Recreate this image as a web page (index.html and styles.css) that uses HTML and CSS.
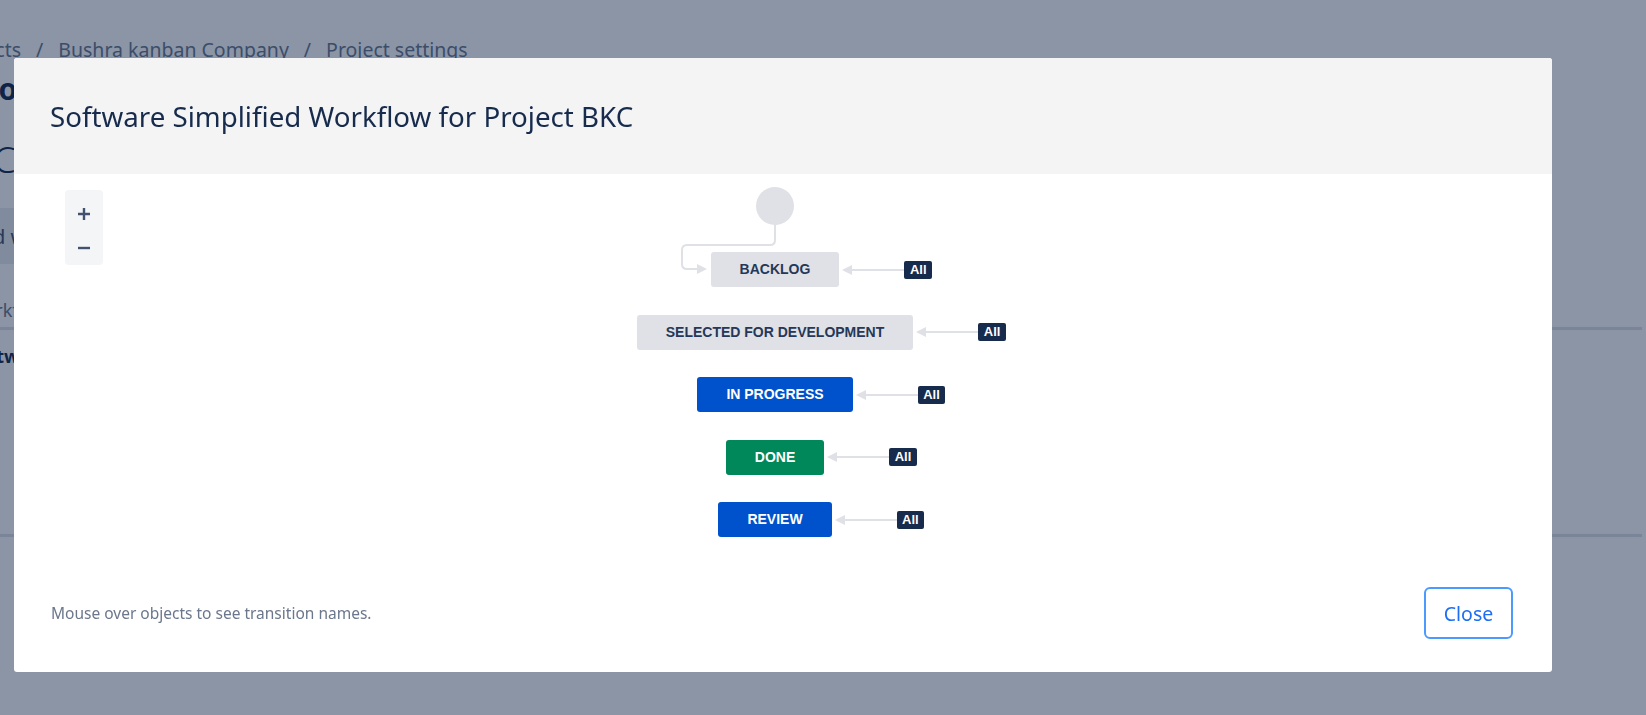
FILE: index.html
```html
<!DOCTYPE html>
<html lang="en">
<head>
<meta charset="utf-8">
<title>Software Simplified Workflow for Project BKC</title>
<link rel="stylesheet" href="styles.css">
</head>
<body>
<div class="page">
  <div class="crumbs"><span class="crumb crumb-first">Projects</span><span class="sep">/</span><span class="crumb">Bushra kanban Company</span><span class="sep">/</span><span class="crumb">Project settings</span></div>
  <h1 class="page-title">Workflows</h1>
  <div class="page-sub">BKC</div>
  <div class="toolbar"><span class="toolbar-text">Add workflow</span></div>
  <div class="table-head">Workflow</div>
  <div class="table-row"><span class="row-name">Software Simplified Workflow for Project BKC</span></div>
</div>

<div class="blanket"></div>

<div class="dialog" role="dialog">
  <div class="dialog-header">
    <h2 class="dialog-title">Software Simplified Workflow for Project BKC</h2>
  </div>
  <div class="dialog-body">
    <div class="zoom-controls">
      <button class="zoom-btn" aria-label="Zoom in"><svg width="14" height="14" viewBox="0 0 14 14"><path d="M7 1v12M1 7h12" stroke="#42526e" stroke-width="2.4" fill="none"/></svg></button>
      <button class="zoom-btn" aria-label="Zoom out"><svg width="14" height="14" viewBox="0 0 14 14"><path d="M1 7h12" stroke="#42526e" stroke-width="2.4" fill="none"/></svg></button>
    </div>
    <div class="diagram">
      <div class="row row-start">
        <div class="cell-mid">
          <div class="start-node">
            <svg class="start-edge" width="96" height="52" viewBox="0 0 96 52">
              <path d="M94 0 V15 Q94 20 89 20 H6 Q1 20 1 25 V39 Q1 44 6 44 H17" stroke="#dfe1e6" stroke-width="2" fill="none"/>
              <polygon points="16,39 26,44 16,49" fill="#dfe1e6"/>
            </svg>
          </div>
        </div>
      </div>
      <div class="row">
        <div class="cell-mid"><div class="status status-grey">BACKLOG</div></div>
        <div class="cell-right"><svg class="arrow" width="10" height="10" viewBox="0 0 10 10"><polygon points="0,5 10,0 10,10" fill="#dfe1e6"/></svg><span class="edge"></span><span class="badge">All</span></div>
      </div>
      <div class="row">
        <div class="cell-mid"><div class="status status-grey">SELECTED FOR DEVELOPMENT</div></div>
        <div class="cell-right"><svg class="arrow" width="10" height="10" viewBox="0 0 10 10"><polygon points="0,5 10,0 10,10" fill="#dfe1e6"/></svg><span class="edge"></span><span class="badge">All</span></div>
      </div>
      <div class="row">
        <div class="cell-mid"><div class="status status-blue">IN PROGRESS</div></div>
        <div class="cell-right"><svg class="arrow" width="10" height="10" viewBox="0 0 10 10"><polygon points="0,5 10,0 10,10" fill="#dfe1e6"/></svg><span class="edge"></span><span class="badge">All</span></div>
      </div>
      <div class="row">
        <div class="cell-mid"><div class="status status-green">DONE</div></div>
        <div class="cell-right"><svg class="arrow" width="10" height="10" viewBox="0 0 10 10"><polygon points="0,5 10,0 10,10" fill="#dfe1e6"/></svg><span class="edge"></span><span class="badge">All</span></div>
      </div>
      <div class="row">
        <div class="cell-mid"><div class="status status-blue">REVIEW</div></div>
        <div class="cell-right"><svg class="arrow" width="10" height="10" viewBox="0 0 10 10"><polygon points="0,5 10,0 10,10" fill="#dfe1e6"/></svg><span class="edge"></span><span class="badge">All</span></div>
      </div>
    </div>
  </div>
  <div class="dialog-footer">
    <p class="hint">Mouse over objects to see transition names.</p>
    <button class="close-btn">Close</button>
  </div>
</div>
</body>
</html>
```
FILE: styles.css
```css
* { box-sizing: border-box; }
html, body { margin: 0; padding: 0; }
body {
  background: #ffffff;
  font-family: "Noto Sans", "Open Sans", sans-serif;
  color: #172b4d;
  width: 1646px;
  height: 715px;
  overflow: hidden;
}

/* underlying page */
.page {
  margin-left: -52px;
  margin-right: 4px;
}
.crumbs {
  margin-top: 37px;
  font-size: 19.5px;
  line-height: 26px;
  color: #6b778c;
  white-space: nowrap;
}
.sep { margin: 0 15px; }
.page-title {
  margin: 8px 0 0 22px;
  font-size: 30px;
  line-height: 36px;
  font-weight: 700;
  color: #172b4d;
}
.page-sub {
  margin: 31px 0 0 2px;
  font-size: 36px;
  line-height: 44px;
  font-weight: 300;
  color: #172b4d;
}
.toolbar {
  margin-top: 26px;
  height: 56px;
  width: 260px;
  background: #ebecf0;
  display: flex;
  align-items: center;
  padding-left: 20px;
  font-size: 20px;
  color: #42526e;
}
.table-head {
  margin-top: 34px;
  padding-left: 20px;
  font-size: 18px;
  line-height: 24px;
  color: #6b778c;
  border-bottom: 3px solid #dfe1e6;
  padding-bottom: 5px;
}
.table-row {
  height: 207px;
  border-bottom: 3px solid #dfe1e6;
  padding-left: 20px;
  padding-top: 14px;
  font-size: 18px;
  line-height: 24px;
}
.row-name { font-weight: 700; }

/* blanket */
.blanket {
  position: fixed;
  inset: 0;
  background: rgba(9, 30, 66, 0.47);
}

/* dialog */
.dialog {
  position: fixed;
  left: 14px;
  top: 58px;
  width: 1538px;
  height: 614px;
  background: #ffffff;
  border-radius: 3px;
  display: flex;
  flex-direction: column;
  overflow: hidden;
}
.dialog-header {
  height: 116px;
  background: #f4f4f4;
  display: flex;
  align-items: center;
  padding: 0 36px;
  flex: none;
}
.dialog-title {
  margin: 0;
  font-size: 27.7px;
  font-weight: 400;
  color: #172b4d;
  line-height: 34px;
}
.dialog-body {
  position: relative;
  flex: 1;
  padding: 13px 16px 0 0;
}
.zoom-controls {
  position: absolute;
  left: 51px;
  top: 16px;
  width: 38px;
  height: 75px;
  background: #f4f5f7;
  border-radius: 4px;
  display: flex;
  flex-direction: column;
  align-items: center;
  padding-top: 17px;
  gap: 20px;
}
.zoom-btn {
  border: 0;
  background: transparent;
  padding: 0;
  width: 14px;
  height: 14px;
  display: block;
}
.zoom-btn svg { display: block; }

.diagram {
  display: flex;
  flex-direction: column;
  gap: 27.5px;
}
.row {
  display: grid;
  grid-template-columns: 1fr auto 1fr;
  align-items: center;
  height: 35px;
}
.row-start { height: 38px; margin-bottom: -0.5px; }
.cell-mid { grid-column: 2; display: flex; justify-content: center; }
.cell-right {
  grid-column: 3;
  display: flex;
  align-items: center;
  padding-left: 3px;
}
.start-node {
  position: relative;
  width: 38px;
  height: 38px;
  border-radius: 50%;
  background: #dfe1e6;
}
.start-edge {
  position: absolute;
  left: -75px;
  top: 38px;
  overflow: visible;
}
.status {
  height: 35px;
  padding: 0 29px;
  border-radius: 3px;
  font-family: "Liberation Sans", Arial, sans-serif;
  font-weight: 700;
  font-size: 14px;
  line-height: 35px;
  white-space: nowrap;
}
.status-grey { background: #dfe1e6; color: #253858; }
.status-blue { background: #0052cc; color: #ffffff; }
.status-green { background: #00875a; color: #ffffff; }
.arrow { display: block; flex: none; }
.edge {
  display: block;
  width: 52px;
  height: 2px;
  background: #dfe1e6;
  flex: none;
}
.badge {
  display: block;
  height: 18px;
  padding: 0 5.5px;
  border-radius: 2px;
  background: #172b4d;
  color: #ffffff;
  font-family: "Liberation Sans", Arial, sans-serif;
  font-weight: 700;
  font-size: 13px;
  line-height: 18px;
}

.dialog-footer {
  flex: none;
  display: flex;
  align-items: center;
  justify-content: space-between;
  padding: 0 39px 33px 37px;
}
.hint {
  margin: 0;
  font-size: 15.5px;
  color: #6b778c;
}
.close-btn {
  width: 89px;
  height: 52px;
  border: 2.5px solid #4c9aff;
  border-radius: 6px;
  background: #ffffff;
  color: #1d6ef5;
  font-family: "Noto Sans", "Open Sans", sans-serif;
  font-size: 19.5px;
  padding: 0;
}
```
